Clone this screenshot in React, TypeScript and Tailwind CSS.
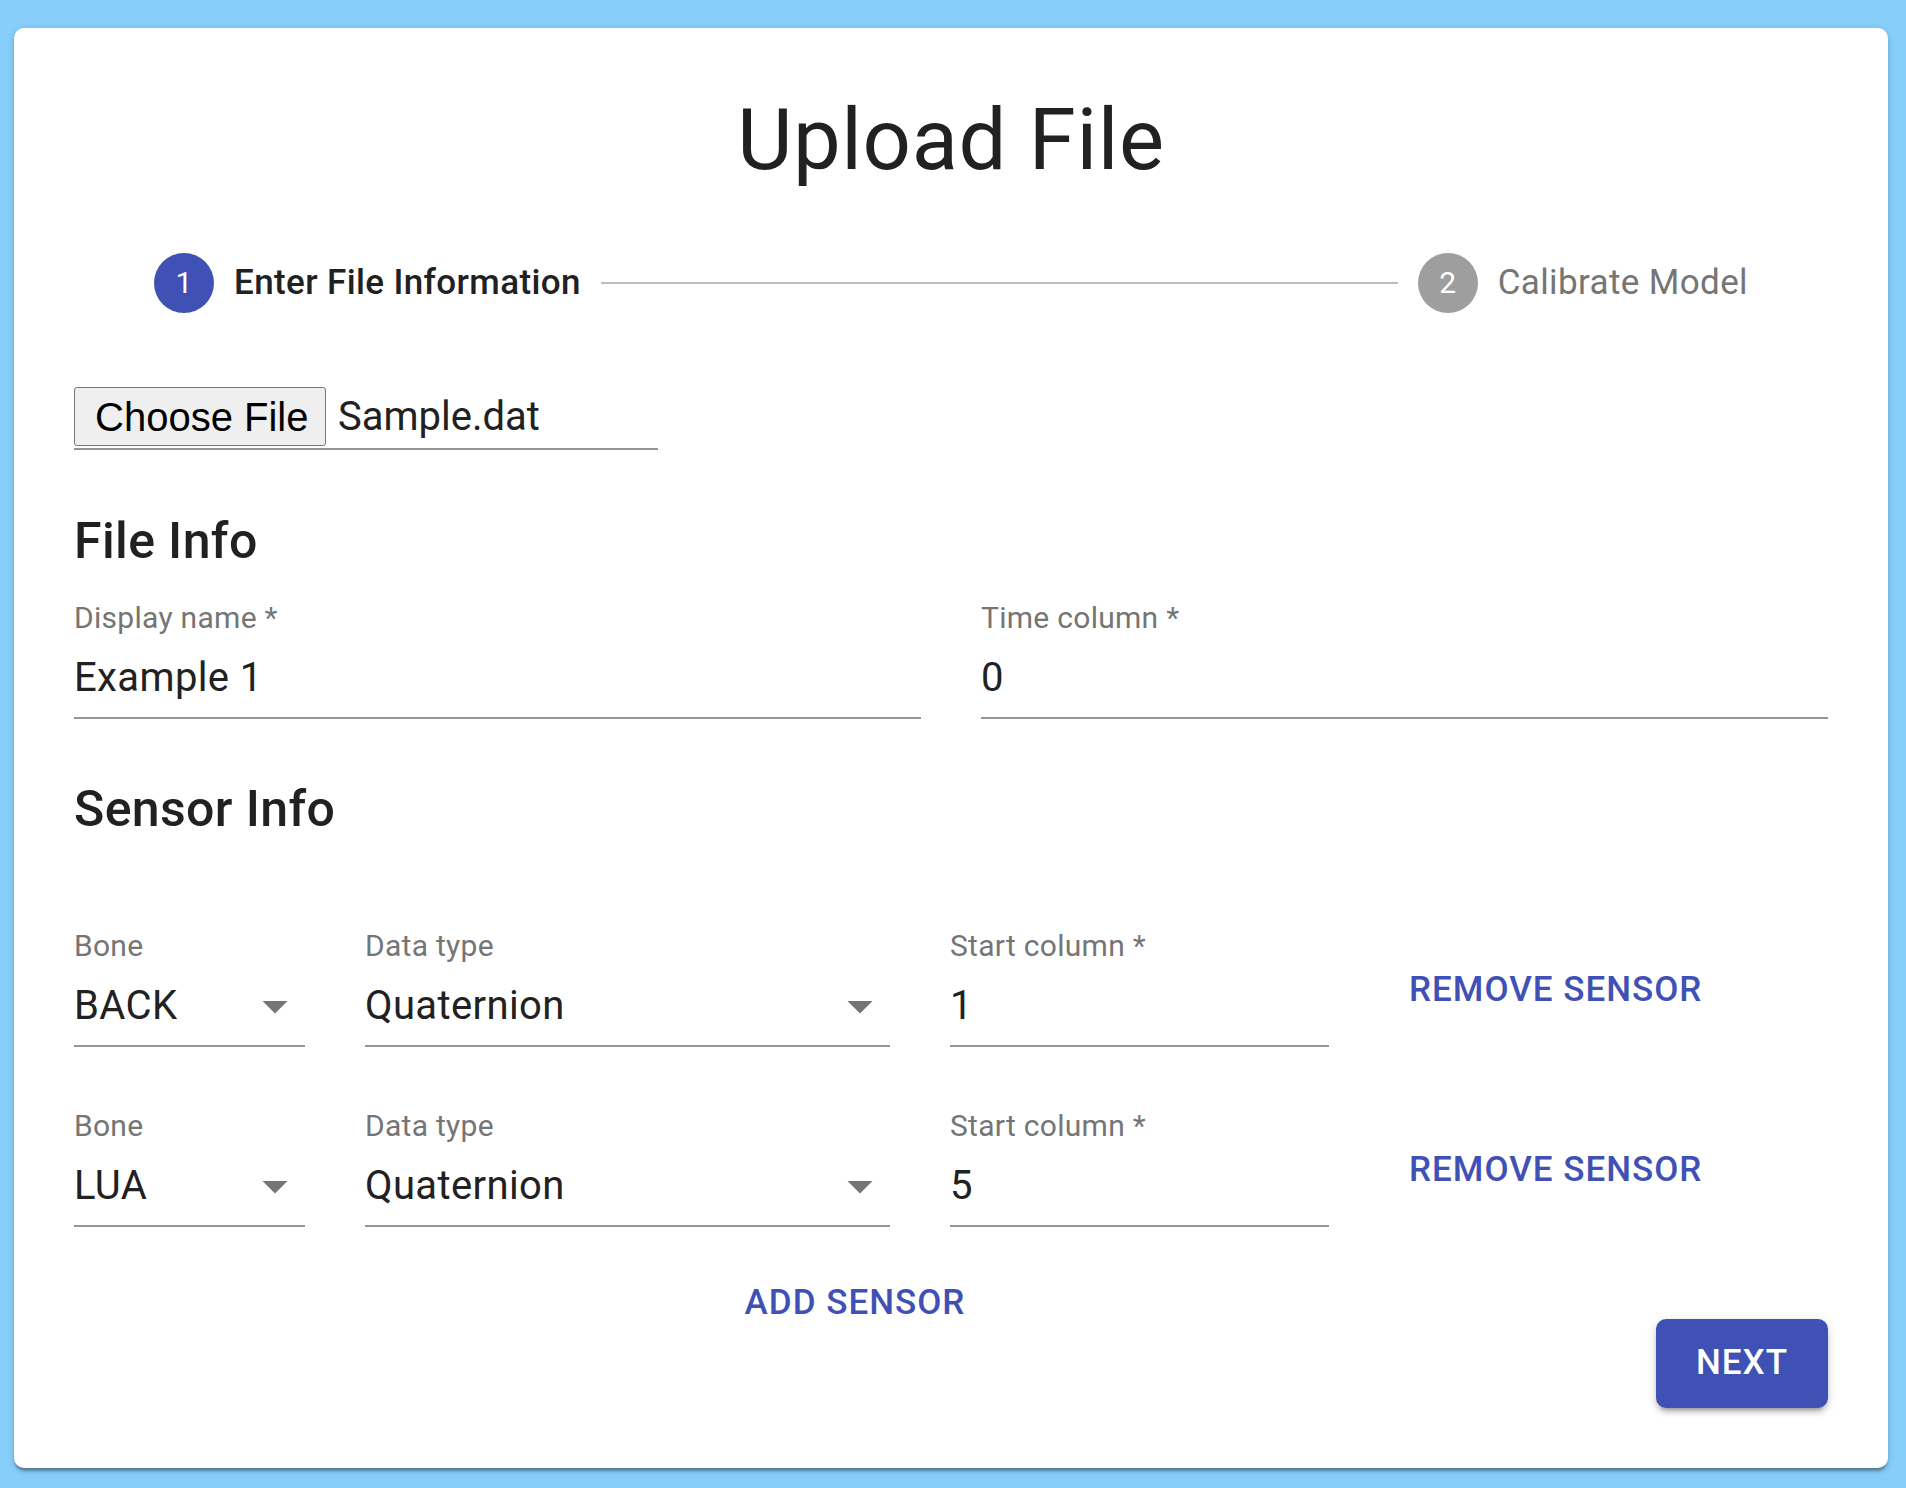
import React from "react";

const font = { fontFamily: "Roboto, 'Liberation Sans', sans-serif" };

interface FieldProps {
  label: string;
  value: string;
  select?: boolean;
  className?: string;
}

// underline field, MUI-like at 2.5x
const Field: React.FC<FieldProps> = ({ label, value, select, className }) => (
  <div className={"flex flex-col " + (className ?? "")}>
    <div className="text-[30px] leading-[30px] text-[#757575] tracking-[0.00938em] whitespace-nowrap">
      {label}
    </div>
    <div className="mt-[21px] flex items-center pb-[15px] border-b-2 border-[#949494]">
      <span className="flex-1 text-[40px] leading-[48px] text-[#212121] tracking-[0.00938em]">
        {value}
      </span>
      {select && (
        <svg viewBox="0 0 24 24" className="w-[60px] h-[60px] -my-[6px] shrink-0" fill="#757575">
          <path d="M7 10l5 5 5-5z" />
        </svg>
      )}
    </div>
  </div>
);

const TextButton: React.FC<{ children: React.ReactNode }> = ({ children }) => (
  <button className="px-[20px] py-[15px] text-[35px] leading-[61px] font-medium uppercase tracking-[0.02857em] text-[#3f51b5] rounded-[10px] whitespace-nowrap">
    {children}
  </button>
);

const sensors = [
  { bone: "BACK", type: "Quaternion", start: "1" },
  { bone: "LUA", type: "Quaternion", start: "5" },
];

export default function App() {
  return (
    <div className="min-h-[1488px] bg-[#87cefa] pt-[28px] pb-[20px] pl-[14px] pr-[18px]" style={font}>
      <div className="bg-white rounded-[10px] p-[60px] flex flex-col shadow-[0_5px_3px_-2px_rgba(0,0,0,0.25),0_2px_3px_0_rgba(0,0,0,0.14),0_2px_8px_0_rgba(0,0,0,0.12)]">
        {/* title */}
        <h1 className="text-center text-[85px] leading-[105px] font-normal text-[#212121] tracking-[0.00735em]">
          Upload File
        </h1>

        {/* stepper */}
        <div className="p-[60px] flex items-center">
          <div className="px-[20px] flex items-center">
            <div className="w-[60px] h-[60px] rounded-full bg-[#3f51b5] flex items-center justify-center text-white text-[30px] leading-none">
              1
            </div>
            <span className="pl-[20px] text-[35px] leading-[50px] font-medium text-[#212121] tracking-[0.01071em] whitespace-nowrap">
              Enter File Information
            </span>
          </div>
          <div className="flex-1 h-[2px] bg-[#bdbdbd]" />
          <div className="px-[20px] flex items-center">
            <div className="w-[60px] h-[60px] rounded-full bg-[#9e9e9e] flex items-center justify-center text-white text-[30px] leading-none">
              2
            </div>
            <span className="pl-[20px] text-[35px] leading-[50px] text-[#757575] tracking-[0.01071em] whitespace-nowrap">
              Calibrate Model
            </span>
          </div>
        </div>

        {/* file input */}
        <div className="w-[584px] h-[77px] pt-[12px] flex items-center border-b-2 border-[#949494]">
          <div
            className="h-[59px] w-[252px] flex items-center pl-[20px] bg-[#efefef] border border-[#767676] rounded-[3px] text-[40px] text-black"
            style={{ fontFamily: "'Liberation Sans', Arial, sans-serif" }}
          >
            Choose File
          </div>
          <span className="ml-[12px] text-[40px] text-[#212121]">Sample.dat</span>
        </div>

        {/* file info */}
        <h2 className="mt-[51px] text-[50px] leading-[80px] font-medium text-[#212121] tracking-[0.0075em]">
          File Info
        </h2>
        <div className="mt-[22px] grid grid-cols-2 gap-x-[60px]">
          <Field label="Display name *" value="Example 1" />
          <Field label="Time column *" value="0" />
        </div>

        {/* sensor info */}
        <h2 className="mt-[50px] text-[50px] leading-[80px] font-medium text-[#212121] tracking-[0.0075em]">
          Sensor Info
        </h2>
        <div className="mt-[82px] flex flex-col gap-[64px]">
          {sensors.map((s, i) => (
            <div key={i} className="flex items-center gap-[60px]">
              <Field className="w-[231px]" label="Bone" value={s.bone} select />
              <Field className="w-[525px]" label="Data type" value={s.type} select />
              <Field className="w-[379px]" label="Start column *" value={s.start} />
              <TextButton>Remove Sensor</TextButton>
            </div>
          ))}
        </div>

        {/* footer */}
        <div className="mt-[30px] flex items-start">
          <div className="flex-1 flex justify-center pr-[20px]">
            <TextButton>Add Sensor</TextButton>
          </div>
          <button className="mt-[62px] h-[89px] px-[40px] bg-[#3f51b5] text-white rounded-[10px] text-[35px] font-medium uppercase tracking-[0.02857em] shadow-[0_7px_3px_-5px_rgba(0,0,0,0.2),0_5px_5px_0_rgba(0,0,0,0.14),0_2px_12px_0_rgba(0,0,0,0.12)]">
            Next
          </button>
        </div>
      </div>
    </div>
  );
}
